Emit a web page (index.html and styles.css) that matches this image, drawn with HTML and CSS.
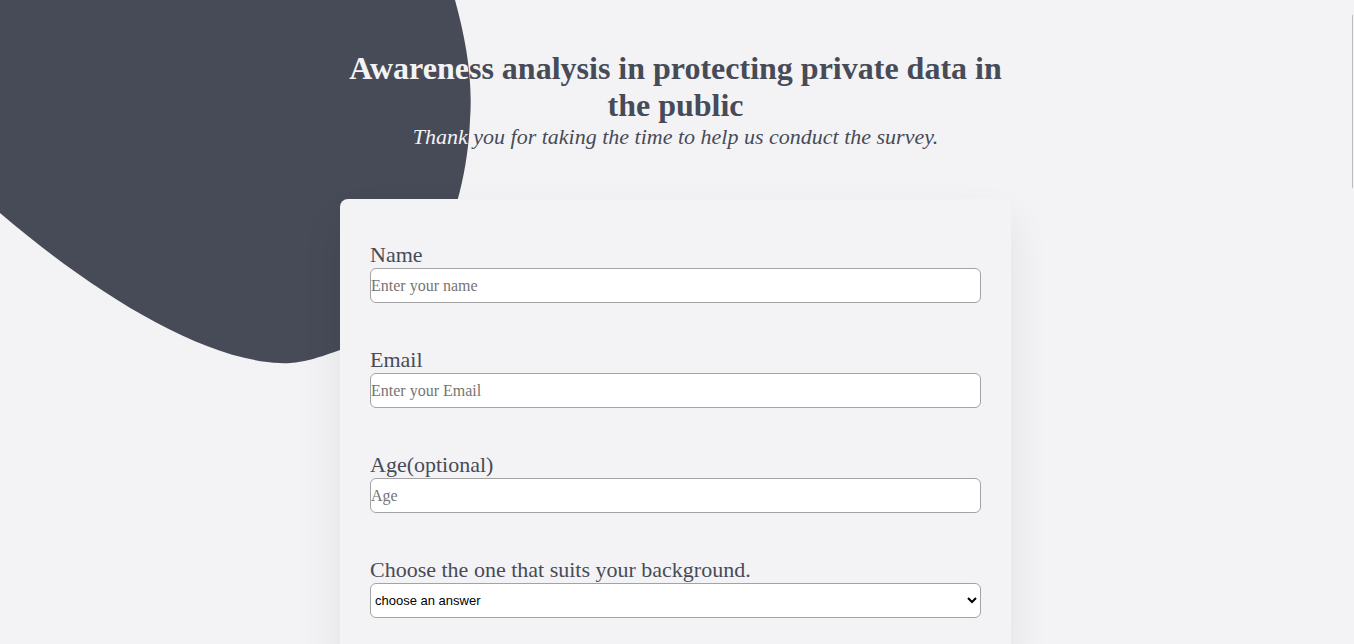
FILE: index.html
```html
<!DOCTYPE html>
<html lang="en">
<head>
<meta charset="utf-8">
<title>Survey</title>
<link rel="stylesheet" href="styles.css">
</head>
<body>
<svg class="blob" width="480" height="370" viewBox="0 0 480 370" aria-hidden="true">
  <path d="M0,0 H455 C466,40 473,80 470,120 C466,220 420,320 340,350 C310,361 295,364 280,363 C200,360 90,290 0,213 Z" fill="#474b57"/>
</svg>
<div class="scroll-thumb" aria-hidden="true"></div>
<div class="page">
  <header class="header">
    <div class="header-layer">
      <div class="header-inner">
        <h1 class="title">Awareness analysis in protecting private data in the public</h1>
        <p class="subtitle">Thank you for taking the time to help us conduct the survey.</p>
      </div>
    </div>
    <div class="header-layer header-light" aria-hidden="true">
      <div class="header-inner">
        <h1 class="title">Awareness analysis in protecting private data in the public</h1>
        <p class="subtitle">Thank you for taking the time to help us conduct the survey.</p>
      </div>
    </div>
  </header>
  <main class="card">
    <form class="form">
      <div class="group">
        <label class="label" for="name">Name</label>
        <input class="field" id="name" type="text" placeholder="Enter your name">
      </div>
      <div class="group">
        <label class="label" for="email">Email</label>
        <input class="field" id="email" type="email" placeholder="Enter your Email">
      </div>
      <div class="group">
        <label class="label" for="age">Age(optional)</label>
        <input class="field" id="age" type="number" placeholder="Age">
      </div>
      <div class="group">
        <label class="label" for="bg">Choose the one that suits your background.</label>
        <select class="field select" id="bg">
          <option>choose an answer</option>
          <option>Student</option>
          <option>Professional</option>
        </select>
      </div>
    </form>
  </main>
</div>
</body>
</html>
```
FILE: styles.css
```css
html, body {
  margin: 0;
  padding: 0;
  background: #f3f3f5;
}
body {
  font-family: "Liberation Serif", "Times New Roman", serif;
  color: #474b57;
  position: relative;
}
.blob {
  position: absolute;
  top: 0;
  left: 0;
  display: block;
}
.scroll-thumb {
  position: fixed;
  top: 15px;
  right: 1px;
  width: 1px;
  height: 173px;
  background: #bdbdbf;
  z-index: 5;
}
.page {
  position: relative;
  margin-right: 3px;
  padding-bottom: 60px;
}
.header {
  position: relative;
}
.header-layer {
  padding-top: 50px;
}
.header-inner {
  width: 680px;
  margin: 0 auto;
  text-align: center;
}
.header-light {
  position: absolute;
  top: 0;
  left: 0;
  right: 0;
  color: #f3f3f5;
  clip-path: path("M0,0 H455 C466,40 473,80 470,120 C466,220 420,320 340,350 C310,361 295,364 280,363 C200,360 90,290 0,213 Z");
}
.title {
  font-size: 32px;
  line-height: 37px;
  font-weight: 700;
  margin: 0;
}
.subtitle {
  font-size: 22px;
  font-style: italic;
  margin: 0;
  line-height: 25px;
}
.card {
  position: relative;
  width: 671px;
  box-sizing: border-box;
  margin: 50px auto 0;
  background: #f3f3f5;
  border-radius: 8px;
  box-shadow: 0 20px 40px rgba(0, 0, 0, 0.08);
  padding: 44px 30px 40px;
}
.form {
  display: flex;
  flex-direction: column;
  gap: 45px;
}
.group {
  display: flex;
  flex-direction: column;
  gap: 1px;
}
.label {
  font-size: 22px;
  line-height: 24px;
  color: #474b57;
}
.field {
  box-sizing: border-box;
  width: 100%;
  height: 35px;
  border: 1px solid #a3a3a3;
  border-radius: 6px;
  background: #fff;
  font-family: "Liberation Serif", serif;
  font-size: 16px;
  padding: 0;
  color: #333;
}
.field::placeholder {
  color: #757575;
}
.select {
  font-family: "Liberation Sans", Arial, sans-serif;
  font-size: 13px;
  color: #000;
  padding: 0;
}
```
